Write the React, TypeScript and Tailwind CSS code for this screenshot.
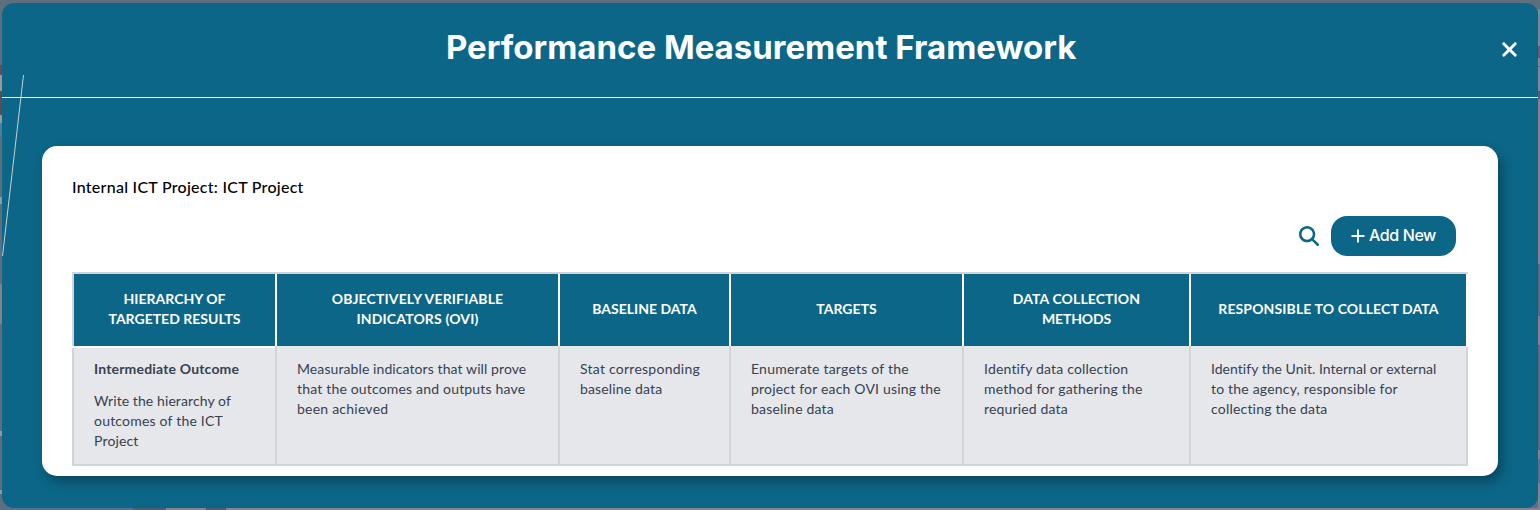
import { FaMagnifyingGlass, FaXmark } from "react-icons/fa6";

type Line = { text: string; track: string };
type Column = { head: Line[]; width: string; sub?: string; lines: Line[] };

const columns: Column[] = [
  {
    width: "w-[203px]",
    head: [
      { text: "HIERARCHY OF", track: "tracking-[0.01px]" },
      { text: "TARGETED RESULTS", track: "tracking-[0.01px]" },
    ],
    sub: "Intermediate Outcome",
    lines: [
      { text: "Write the hierarchy of", track: "tracking-[0.09px]" },
      { text: "outcomes of the ICT", track: "tracking-[0.2px]" },
      { text: "Project", track: "tracking-[0.15px]" },
    ],
  },
  {
    width: "w-[283px]",
    head: [
      { text: "OBJECTIVELY VERIFIABLE", track: "tracking-[0.14px]" },
      { text: "INDICATORS (OVI)", track: "tracking-[0.17px]" },
    ],
    lines: [
      { text: "Measurable indicators that will prove", track: "tracking-[0.09px]" },
      { text: "that the outcomes and outputs have", track: "tracking-[0.18px]" },
      { text: "been achieved", track: "tracking-[0.23px]" },
    ],
  },
  {
    width: "w-[171px]",
    head: [{ text: "BASELINE DATA", track: "tracking-[0.01px]" }],
    lines: [
      { text: "Stat corresponding", track: "tracking-[0.25px]" },
      { text: "baseline data", track: "tracking-[0.15px]" },
    ],
  },
  {
    width: "w-[233px]",
    head: [{ text: "TARGETS", track: "tracking-[0.05px]" }],
    lines: [
      { text: "Enumerate targets of the", track: "tracking-[0.22px]" },
      { text: "project for each OVI using the", track: "tracking-[0.19px]" },
      { text: "baseline data", track: "tracking-[0.2px]" },
    ],
  },
  {
    width: "w-[227px]",
    head: [
      { text: "DATA COLLECTION", track: "tracking-[0.1px]" },
      { text: "METHODS", track: "tracking-[-0.15px]" },
    ],
    lines: [
      { text: "Identify data collection", track: "tracking-[0.18px]" },
      { text: "method for gathering the", track: "tracking-[0.2px]" },
      { text: "requried data", track: "tracking-[0.15px]" },
    ],
  },
  {
    width: "w-[277px]",
    head: [{ text: "RESPONSIBLE TO COLLECT DATA", track: "tracking-[0.12px]" }],
    lines: [
      { text: "Identify the Unit. Internal or external", track: "tracking-[0.03px]" },
      { text: "to the agency, responsible for", track: "tracking-[0.2px]" },
      { text: "collecting the data", track: "tracking-[0.2px]" },
    ],
  },
];

function Lines({ lines }: { lines: Line[] }) {
  return (
    <>
      {lines.map((line) => (
        <div key={line.text} className={`whitespace-nowrap ${line.track}`}>{line.text}</div>
      ))}
    </>
  );
}

export default function App() {
  return (
    <div className="relative flex h-[510px] w-[1540px] flex-col overflow-hidden bg-[#5b6f7c] font-['Lato',sans-serif]">
      <div className="h-[3px] shrink-0" />
      <div className="flex h-[505px] shrink-0">
        <div className="w-0.5 bg-[linear-gradient(to_bottom,#5b6f7c_62px,#6b4a50_62px_72px,#959a9f_72px_88px,#5f4b55_88px_112px,#959a9f_112px_120px,#4682a0_120px_133px,#5b6f7c_133px_194px,#8f9a9f_194px_201px,#5b6f7c_201px_281px,#848088_281px_321px,#5b6f7c_321px_428px,#8f9a9f_428px_433px,#5b6f7c_433px_487px,#8f9a9f_487px_491px,#5b6f7c_491px)]" />
        <main className="w-[1536px] overflow-hidden rounded-xl bg-[#0c6687]">
          <header className="flex h-[95px] items-center border-b border-white">
            <h1 className="-mt-[5px] ml-[444px] w-[640px] whitespace-nowrap font-['Inter',sans-serif] text-[33px] font-bold text-white">
              Performance Measurement Framework
            </h1>
            <button aria-label="Close" className="mr-[17.5px] ml-auto -mt-px text-white">
              <FaXmark size={23} />
            </button>
          </header>
          <section className="mx-10 mt-12 h-[330px] rounded-[15px] bg-white px-[30px] pt-[30px] shadow-[4px_6px_12px_rgba(0,0,0,0.3)]">
            <h2 className="h-10 text-base leading-[22px] font-medium tracking-[0.27px] text-black">Internal ICT Project: ICT Project</h2>
            <div className="flex h-10 items-center justify-end gap-3 pr-3">
              <FaMagnifyingGlass size={20} color="#0c6687" />
              <button className="flex h-10 w-[125px] items-center justify-center gap-1 rounded-2xl bg-[#0c6687] pb-0.5 font-['Inter',sans-serif] text-base font-medium tracking-[-0.4px] text-white">
                <svg width="14" height="14" viewBox="0 0 14 14" stroke="white" strokeWidth="1.8" className="mt-px">
                  <path d="M7 .5v13M.5 7h13" />
                </svg>
                <span>Add New</span>
              </button>
            </div>
            <div className="mt-4 w-[1396px] border-t-2 border-[#d1d5db]">
              <div className="flex h-[72px]">
                {columns.map((c) => (
                  <div
                    key={c.head[0].text}
                    className={`${c.width} flex shrink-0 flex-col items-center justify-center border-l-2 border-white bg-[#0c6687] pb-0.5 text-sm leading-5 font-bold text-white first:border-[#d1d5db]`}
                  >
                    <Lines lines={c.head} />
                  </div>
                ))}
              </div>
              <div className="flex h-[120px] border-b-2 border-[#d1d5db]">
                {columns.map((c) => (
                  <div
                    key={c.head[0].text}
                    className={`${c.width} shrink-0 border-l-2 border-[#d1d5db] bg-[#e5e7eb] pt-[13px] pl-5 text-sm leading-5 text-[#374151] first:mt-0.5 first:pt-[11px]`}
                  >
                    {c.sub && <div className="mb-3 font-bold tracking-[0.18px]">{c.sub}</div>}
                    <Lines lines={c.lines} />
                  </div>
                ))}
                <div className="mt-px w-0.5 bg-[#d1d5db]" />
              </div>
            </div>
          </section>
        </main>
        <div className="w-0.5 bg-[linear-gradient(to_bottom,#5b6f7c_6px,#7b8794_6px_43px,#5f5f70_43px_55px,#848893_55px_63px,#5f6675_63px_64px,#848893_64px_88px,#56606c_88px_96px,#84828c_96px_261px,#5f6675_261px_313px,#84828c_313px_342px,#5f6675_342px_447px,#84828c_447px_456px,#5d7088_456px_480px,#84828c_480px)]" />
      </div>
      <div className="h-0.5 bg-[linear-gradient(to_right,#56708a_133px,#4a5e6e_133px_166px,#84828c_166px_206px,#4a5e6e_206px_226px,#84828c_226px)]" />
      <svg className="pointer-events-none absolute top-0 left-0" width="30" height="260" viewBox="0 0 30 260">
        <path d="M23.5 75L2.5 256" stroke="#d9dcdc" strokeWidth="0.9" />
      </svg>
    </div>
  );
}
